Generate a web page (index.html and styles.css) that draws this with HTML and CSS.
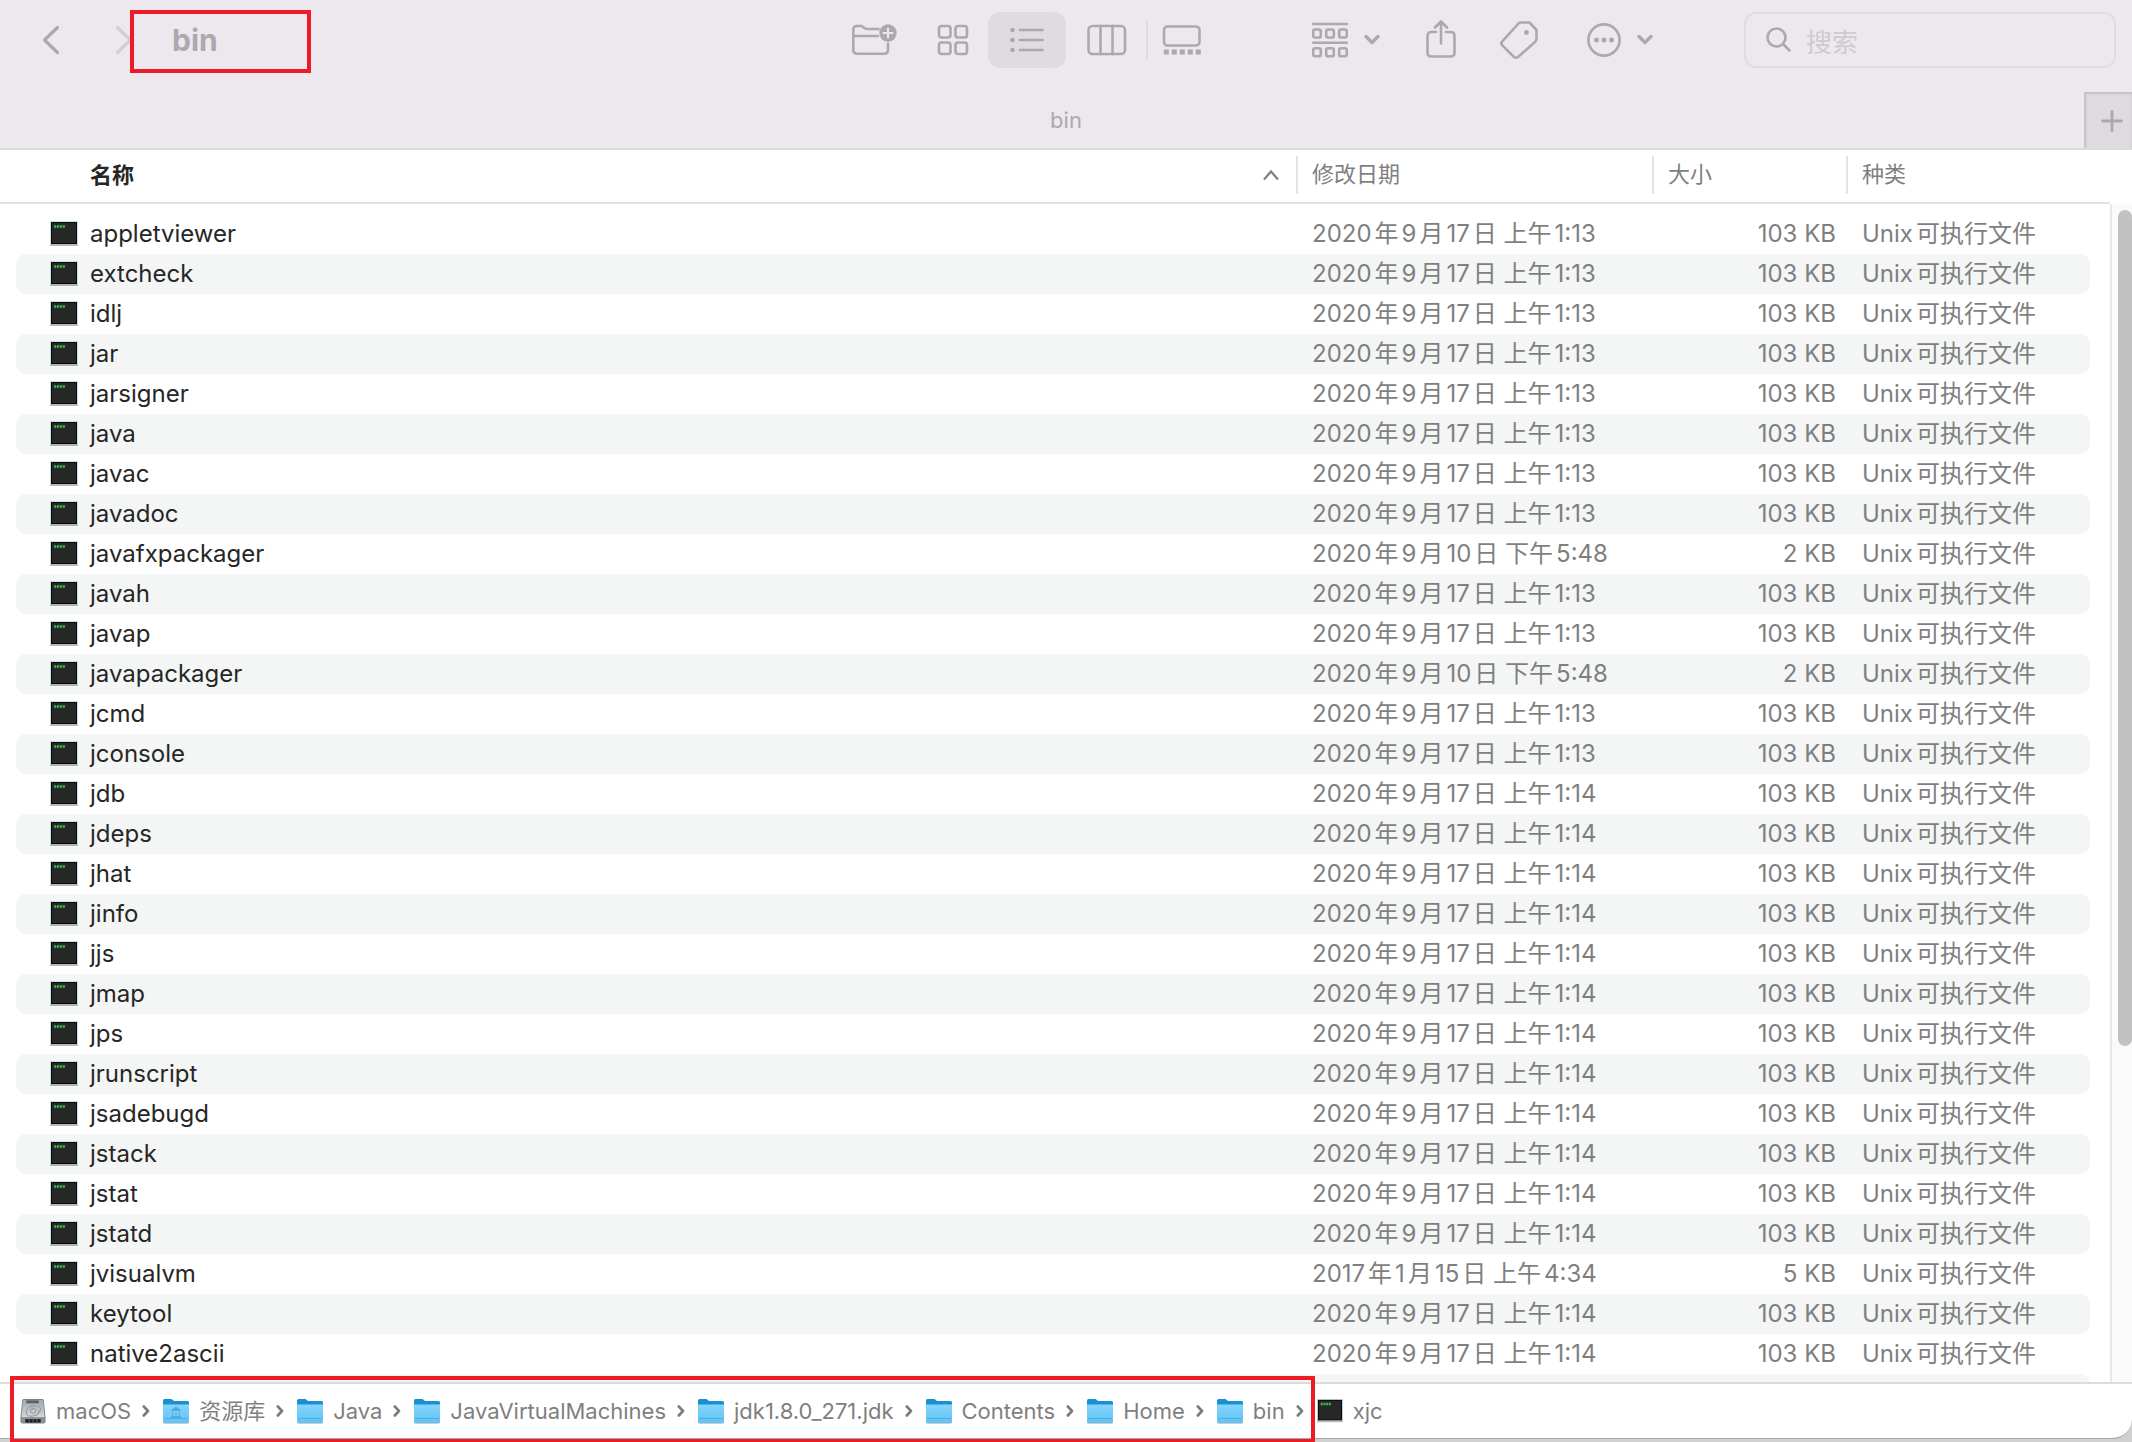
FILE: index.html
```html
<!DOCTYPE html>
<html lang="zh-CN">
<head>
<meta charset="utf-8">
<meta name="viewport" content="width=device-width, initial-scale=1">
<title>bin</title>
<link rel="stylesheet" href="styles.css">
</head>
<body>
<svg class="sprite" aria-hidden="true">
  <defs>
    <linearGradient id="front" x1="0" y1="0" x2="0" y2="1"><stop offset="0" stop-color="#83d5fd"/><stop offset="1" stop-color="#62c3f5"/></linearGradient>
    <linearGradient id="metal" x1="0" y1="0" x2="0" y2="1"><stop offset="0" stop-color="#a3abb0"/><stop offset="1" stop-color="#d2d7da"/></linearGradient>
    <symbol id="exec" viewBox="0 0 28 26">
      <rect x="0" y="2" width="28" height="23" rx="1" fill="#000" opacity=".28"/>
      <rect x="0" y="0" width="28" height="23" fill="#c4e3ea"/>
      <rect x="1" y="1" width="26" height="22" fill="#0a0a0a"/>
      <rect x="2" y="2" width="24" height="20" fill="#272727"/>
      <path d="M4 5.500h11" stroke="#37b24d" stroke-width="2.600" stroke-dasharray="2.300 .6"/>
    </symbol>
    <symbol id="folder" viewBox="0 0 26 26">
      <rect x="0" y="4" width="26" height="22" rx="2" fill="#000" opacity=".2"/>
      <path d="M0 2.500Q0 1 1.500 1H8q1 0 1.600.7l.8.800q.5.500 1.300.500h12.800Q26 3 26 4.500V12H0z" fill="#1b8fd2"/>
      <path d="M0 6.500h26v17q0 1.500-1.500 1.500h-23Q0 25 0 23.500z" fill="url(#front)"/>
      <path d="M1 20.500h24" stroke="#4aaee2" stroke-width="1"/>
    </symbol>
    <symbol id="library" viewBox="0 0 26 26">
      <use href="#folder" width="26" height="26"/>
      <path d="M8 12.500l5-3.500 5 3.500zM8.500 18.500h9v1h-9zM9.500 13.500v4.500M13 13.500v4.500M16.500 13.500v4.500" fill="#4fa9da" stroke="#4fa9da" stroke-width=".8"/>
    </symbol>
    <symbol id="disk" viewBox="0 0 26 27">
      <path d="M3.500 1h19q1.500 0 1.700 1.500L26 20v4.500q0 2-2 2H2q-2 0-2-2V20L1.800 2.500Q2 1 3.500 1z" fill="#7b8286"/>
      <path d="M3.800 2h18.400q1 0 1.200 1L25 20H1L2.600 3q.2-1 1.200-1z" fill="url(#metal)"/>
      <path d="M6 2.500h13v3H6z" fill="#596066"/>
      <path d="M17 9c-4-2-10 0-11 5s4 5.500 8 4.500 6-4 5-6.500M10 14q0-3 3.500-3t2 3.500-5.500-.5M19 8q5 5-3 10" fill="none" stroke="#878f94" stroke-width=".9"/>
      <path d="M1 21h24v4q0 1-1 1H2q-1 0-1-1z" fill="#8b9195"/>
      <path d="M5 22h16v3.500H5z" fill="#1c1f21"/>
      <path d="M9 22v4M13 22v4M17 22v4" stroke="#64696c"/>
    </symbol>
    <symbol id="down" viewBox="0 0 16 12"><path d="M2 2.500l6 6 6-6" fill="none" stroke="#aca8ad" stroke-width="3.400" stroke-linecap="round" stroke-linejoin="round"/></symbol>
    <symbol id="next" viewBox="0 0 8 12"><path d="M1.800 1.500L6 6l-4.200 4.500" fill="none" stroke="#7c7c7c" stroke-width="2.600" stroke-linecap="round" stroke-linejoin="round"/></symbol>
  </defs>
</svg>

<div class="window">
  <header class="toolbar">
    <nav class="history">
      <button class="back" aria-label="后退"><svg width="18" height="30" viewBox="0 0 18 30"><path d="M15.500 2.500L2.500 15l13 12.500"/></svg></button>
      <button class="forward" aria-label="前进" disabled><svg width="18" height="30" viewBox="0 0 18 30"><path d="M2.500 2.500L15.500 15l-13 12.500"/></svg></button>
      <h1 class="title">bin</h1>
    </nav>

    <div class="views">
      <button class="new-folder" aria-label="新建文件夹"><svg width="46" height="34" viewBox="0 0 46 34"><path d="M27.500 6H16.500q-2 0-3.500-1.300L12 4q-1-1-2.500-1H6Q2.300 3 2.300 7v20q0 3.700 4 3.700h27q3.700 0 3.700-3.700V20.500M2.300 13h24.700"/><circle class="solid" cx="37" cy="10" r="8.700"/><path class="plus" d="M37 5.500v9M32.500 10h9"/></svg></button>
      <button class="view icons" aria-label="图标"><svg width="32" height="32" viewBox="0 0 32 32"><rect x="2" y="2" width="11.500" height="11.500" rx="2.500"/><rect x="18.500" y="2" width="11.500" height="11.500" rx="2.500"/><rect x="2" y="18.500" width="11.500" height="11.500" rx="2.500"/><rect x="18.500" y="18.500" width="11.500" height="11.500" rx="2.500"/></svg></button>
      <button class="view list" aria-label="列表" aria-pressed="true"><svg width="34" height="26" viewBox="0 0 34 26"><path d="M10 3h22.500M10 13h22.500M10 23h22.500"/><circle class="solid" cx="2.500" cy="3" r="2.300"/><circle class="solid" cx="2.500" cy="13" r="2.300"/><circle class="solid" cx="2.500" cy="23" r="2.300"/></svg></button>
      <button class="view columns" aria-label="分栏"><svg width="40" height="32" viewBox="0 0 40 32"><rect x="1.500" y="2" width="36.500" height="28" rx="4"/><path d="M13.500 2v28M25.500 2v28"/></svg></button>
      <button class="view gallery" aria-label="画廊"><svg width="40" height="30" viewBox="0 0 40 30"><rect x="2" y="1.500" width="35.500" height="19" rx="3.500"/><path class="dots" d="M1.800 27h37"/></svg></button>
    </div>

    <div class="actions">
      <button class="group" aria-label="分组"><svg width="36" height="36" viewBox="0 0 36 36"><path d="M1.200 2h33.600M1.200 20.700h33.600"/><rect x="1.200" y="7.500" width="7.600" height="8" rx="1.800"/><rect x="14.200" y="7.500" width="7.600" height="8" rx="1.800"/><rect x="27.200" y="7.500" width="7.600" height="8" rx="1.800"/><rect x="1.200" y="26.300" width="7.600" height="8" rx="1.800"/><rect x="14.200" y="26.300" width="7.600" height="8" rx="1.800"/><rect x="27.200" y="26.300" width="7.600" height="8" rx="1.800"/></svg><svg width="16" height="12"><use href="#down"/></svg></button>
      <button class="share" aria-label="共享"><svg width="30" height="40" viewBox="0 0 30 40"><path d="M10 12H5.500q-4 0-4 4v16.500q0 4 4 4h19q4 0 4-4V16q0-4-4-4H20M15 23.500V1.500M9 7.500l6-6 6 6"/></svg></button>
      <button class="tag" aria-label="标签"><svg width="38" height="38" viewBox="0 0 38 38"><path d="M20.500 1.500h9L36.500 9v8.500q0 2-1.500 3.500L18 36q-2 1.500-4 0L2.300 24.300q-2-2 0-4L18 3q1-1.500 2.500-1.500z"/><circle class="solid" cx="26.500" cy="11.500" r="2.400"/></svg></button>
      <button class="more" aria-label="更多"><svg width="34" height="34" viewBox="0 0 34 34"><circle cx="17" cy="17" r="15.600"/><g class="solid"><circle cx="9.500" cy="17" r="2.500"/><circle cx="17" cy="17" r="2.500"/><circle cx="24.500" cy="17" r="2.500"/></g></svg><svg width="16" height="12"><use href="#down"/></svg></button>
    </div>

    <label class="search">
      <svg width="26" height="26" viewBox="0 0 26 26"><circle cx="10.500" cy="10.500" r="9"/><path d="M17.500 17.500l6 6"/></svg>
      <input type="search" placeholder="搜索" aria-label="搜索">
    </label>
  </header>

  <div class="tabs">
    <div class="tab">bin</div>
    <button class="add-tab" aria-label="新建标签页"><svg width="22" height="22" viewBox="0 0 22 22"><path d="M11 1.500v19M1.500 11h19"/></svg></button>
  </div>

  <main class="content">
    <table class="files">
      <thead>
        <tr><th class="name" aria-sort="ascending">名称<svg width="18" height="12" viewBox="0 0 18 12"><path d="M2 10.500l7-8 7 8"/></svg></th><th>修改日期</th><th>大小</th><th>种类</th></tr>
      </thead>
      <tbody>
        <tr><td><svg><use href="#exec"/></svg>appletviewer</td><td>2020年9月17日 上午1:13</td><td>103 KB</td><td>Unix可执行文件</td></tr>
        <tr><td><svg><use href="#exec"/></svg>extcheck</td><td>2020年9月17日 上午1:13</td><td>103 KB</td><td>Unix可执行文件</td></tr>
        <tr><td><svg><use href="#exec"/></svg>idlj</td><td>2020年9月17日 上午1:13</td><td>103 KB</td><td>Unix可执行文件</td></tr>
        <tr><td><svg><use href="#exec"/></svg>jar</td><td>2020年9月17日 上午1:13</td><td>103 KB</td><td>Unix可执行文件</td></tr>
        <tr><td><svg><use href="#exec"/></svg>jarsigner</td><td>2020年9月17日 上午1:13</td><td>103 KB</td><td>Unix可执行文件</td></tr>
        <tr><td><svg><use href="#exec"/></svg>java</td><td>2020年9月17日 上午1:13</td><td>103 KB</td><td>Unix可执行文件</td></tr>
        <tr><td><svg><use href="#exec"/></svg>javac</td><td>2020年9月17日 上午1:13</td><td>103 KB</td><td>Unix可执行文件</td></tr>
        <tr><td><svg><use href="#exec"/></svg>javadoc</td><td>2020年9月17日 上午1:13</td><td>103 KB</td><td>Unix可执行文件</td></tr>
        <tr><td><svg><use href="#exec"/></svg>javafxpackager</td><td>2020年9月10日 下午5:48</td><td>2 KB</td><td>Unix可执行文件</td></tr>
        <tr><td><svg><use href="#exec"/></svg>javah</td><td>2020年9月17日 上午1:13</td><td>103 KB</td><td>Unix可执行文件</td></tr>
        <tr><td><svg><use href="#exec"/></svg>javap</td><td>2020年9月17日 上午1:13</td><td>103 KB</td><td>Unix可执行文件</td></tr>
        <tr><td><svg><use href="#exec"/></svg>javapackager</td><td>2020年9月10日 下午5:48</td><td>2 KB</td><td>Unix可执行文件</td></tr>
        <tr><td><svg><use href="#exec"/></svg>jcmd</td><td>2020年9月17日 上午1:13</td><td>103 KB</td><td>Unix可执行文件</td></tr>
        <tr><td><svg><use href="#exec"/></svg>jconsole</td><td>2020年9月17日 上午1:13</td><td>103 KB</td><td>Unix可执行文件</td></tr>
        <tr><td><svg><use href="#exec"/></svg>jdb</td><td>2020年9月17日 上午1:14</td><td>103 KB</td><td>Unix可执行文件</td></tr>
        <tr><td><svg><use href="#exec"/></svg>jdeps</td><td>2020年9月17日 上午1:14</td><td>103 KB</td><td>Unix可执行文件</td></tr>
        <tr><td><svg><use href="#exec"/></svg>jhat</td><td>2020年9月17日 上午1:14</td><td>103 KB</td><td>Unix可执行文件</td></tr>
        <tr><td><svg><use href="#exec"/></svg>jinfo</td><td>2020年9月17日 上午1:14</td><td>103 KB</td><td>Unix可执行文件</td></tr>
        <tr><td><svg><use href="#exec"/></svg>jjs</td><td>2020年9月17日 上午1:14</td><td>103 KB</td><td>Unix可执行文件</td></tr>
        <tr><td><svg><use href="#exec"/></svg>jmap</td><td>2020年9月17日 上午1:14</td><td>103 KB</td><td>Unix可执行文件</td></tr>
        <tr><td><svg><use href="#exec"/></svg>jps</td><td>2020年9月17日 上午1:14</td><td>103 KB</td><td>Unix可执行文件</td></tr>
        <tr><td><svg><use href="#exec"/></svg>jrunscript</td><td>2020年9月17日 上午1:14</td><td>103 KB</td><td>Unix可执行文件</td></tr>
        <tr><td><svg><use href="#exec"/></svg>jsadebugd</td><td>2020年9月17日 上午1:14</td><td>103 KB</td><td>Unix可执行文件</td></tr>
        <tr><td><svg><use href="#exec"/></svg>jstack</td><td>2020年9月17日 上午1:14</td><td>103 KB</td><td>Unix可执行文件</td></tr>
        <tr><td><svg><use href="#exec"/></svg>jstat</td><td>2020年9月17日 上午1:14</td><td>103 KB</td><td>Unix可执行文件</td></tr>
        <tr><td><svg><use href="#exec"/></svg>jstatd</td><td>2020年9月17日 上午1:14</td><td>103 KB</td><td>Unix可执行文件</td></tr>
        <tr><td><svg><use href="#exec"/></svg>jvisualvm</td><td>2017年1月15日 上午4:34</td><td>5 KB</td><td>Unix可执行文件</td></tr>
        <tr><td><svg><use href="#exec"/></svg>keytool</td><td>2020年9月17日 上午1:14</td><td>103 KB</td><td>Unix可执行文件</td></tr>
        <tr><td><svg><use href="#exec"/></svg>native2ascii</td><td>2020年9月17日 上午1:14</td><td>103 KB</td><td>Unix可执行文件</td></tr>
        <tr><td></td><td></td><td></td><td></td></tr>
      </tbody>
    </table>
    <div class="scrollbar"><div class="thumb"></div></div>
  </main>

  <footer class="path">
    <ol>
      <li><svg class="item"><use href="#disk"/></svg>macOS<svg class="next"><use href="#next"/></svg></li>
      <li><svg class="item"><use href="#library"/></svg>资源库<svg class="next"><use href="#next"/></svg></li>
      <li><svg class="item"><use href="#folder"/></svg>Java<svg class="next"><use href="#next"/></svg></li>
      <li><svg class="item"><use href="#folder"/></svg>JavaVirtualMachines<svg class="next"><use href="#next"/></svg></li>
      <li><svg class="item"><use href="#folder"/></svg>jdk1.8.0_271.jdk<svg class="next"><use href="#next"/></svg></li>
      <li><svg class="item"><use href="#folder"/></svg>Contents<svg class="next"><use href="#next"/></svg></li>
      <li><svg class="item"><use href="#folder"/></svg>Home<svg class="next"><use href="#next"/></svg></li>
      <li><svg class="item"><use href="#folder"/></svg>bin<svg class="next"><use href="#next"/></svg></li>
      <li><svg class="item"><use href="#exec"/></svg>xjc</li>
    </ol>
  </footer>
</div>
<div class="mark mark-title"></div>
<div class="mark mark-path"></div>
</body>
</html>
```
FILE: styles.css
```css
* { box-sizing: border-box; }

body {
  margin: 0;
  height: 100vh;
  padding-bottom: 3px;
  overflow: hidden;
  position: relative;
  background: #d0d0d0;
  color: #262626;
  font: 24px/40px "Inter", "Noto Sans CJK SC", sans-serif;
  text-autospace: normal;
}

button {
  display: flex;
  align-items: center;
  justify-content: center;
  height: 56px;
  padding: 0;
  border: 0;
  background: none;
}

.sprite { position: absolute; width: 0; height: 0; }

.window {
  display: flex;
  flex-direction: column;
  height: 100%;
  overflow: hidden;
  background: #fff;
  border-bottom: 1px solid #a8a8a8;
  border-bottom-right-radius: 20px;
}

/* Toolbar */
.toolbar {
  display: flex;
  align-items: center;
  flex: none;
  height: 92px;
  padding: 0 16px 12px 42px;
  background: #ede8ee;
}
.toolbar svg {
  fill: none;
  stroke: #aca8ad;
  stroke-width: 2.6;
  stroke-linecap: round;
  stroke-linejoin: round;
}
.toolbar .solid { fill: #aca8ad; stroke: none; }
.toolbar .plus { stroke: #ede8ee; stroke-width: 2; }
.toolbar .dots { stroke-width: 5; stroke-dasharray: 5 3; stroke-linecap: butt; }

.history { display: flex; align-items: center; flex: 1; }
.history svg { stroke-width: 3.2; }
.forward { margin-left: 55px; }
.forward svg { stroke: #d3ced4; }
.title { margin: 0 0 0 39px; font-size: 30px; line-height: 40px; color: #aca8ad; }

.views, .actions { display: flex; align-items: center; }
.new-folder { width: 64px; margin-right: 12px; }
.icons { width: 70px; }
.list { width: 78px; border-radius: 12px; background: #dfdbe0; }
.columns { width: 82px; }
.gallery { width: 68px; position: relative; }
.gallery::before {
  content: "";
  position: absolute;
  left: -2px;
  width: 2px;
  height: 40px;
  background: #dfdbe0;
}

.actions { margin-left: 80px; }
.group, .more { width: 100px; gap: 16px; }
.share { width: 90px; }
.tag { width: 66px; }
.more { margin-left: 18px; }

.search {
  display: flex;
  align-items: center;
  gap: 14px;
  width: 372px;
  height: 56px;
  margin-left: 74px;
  padding: 0 20px;
  border: 2px solid #dfdbe0;
  border-radius: 12px;
}
.search input {
  flex: 1;
  min-width: 0;
  padding: 6px 0 0;
  border: 0;
  outline: 0;
  background: none;
  font: 26px/40px "Inter", "Noto Sans CJK SC", sans-serif;
}
.search input::placeholder { color: #cfcad0; opacity: 1; }

/* Tabs */
.tabs {
  display: grid;
  grid-template-columns: 48px 1fr 48px;
  flex: none;
  height: 58px;
  border-bottom: 2px solid #dcdadc;
  background: #ede8ee;
}
.tab {
  grid-column: 2;
  text-align: center;
  font-size: 22px;
  line-height: 56px;
  color: #aca8ad;
}
.add-tab {
  padding: 2px 0 0 6px;
  border-left: 2px solid #c9c4ca;
  background: #dfdae0;
  box-shadow: inset 0 2px 2px #c4bfc5;
}
.add-tab svg { stroke: #aca8ad; stroke-width: 2.8; stroke-linecap: round; }

/* File list */
.content { display: flex; flex: 1; min-height: 0; overflow: hidden; }
.files { display: block; flex: 1; }
.files thead, .files tbody { display: block; }
.files tr {
  display: grid;
  grid-template-columns: 1fr 356px 194px 244px;
}
.files thead tr {
  height: 54px;
  padding: 6px 20px 8px 16px;
  border-bottom: 2px solid #e0e0e0;
}
.files th {
  padding: 0 14px;
  border-left: 2px solid #e2e2e2;
  text-align: left;
  font-size: 22px;
  line-height: 36px;
  font-weight: 400;
  color: #7f7f7f;
}
.files th.name {
  display: flex;
  align-items: center;
  justify-content: space-between;
  padding-left: 74px;
  padding-right: 16px;
  border-left: 0;
  font-weight: 700;
  color: #262626;
}
.files th svg { fill: none; stroke: #7f7f7f; stroke-width: 2.2; }
.files tbody { padding-top: 10px; }
.files tbody tr { height: 40px; margin: 0 20px 0 16px; border-radius: 10px; }
.files tbody tr:nth-child(even) { background: #f4f6f5; }
.files td { padding: 0 0 0 16px; color: #7f7f7f; }
.files td:first-child {
  display: flex;
  align-items: center;
  gap: 12px;
  padding-left: 34px;
  color: #262626;
}
.files td:nth-child(3) { padding-right: 10px; text-align: right; }
.files td svg { width: 28px; height: 26px; }

.scrollbar {
  width: 22px;
  margin-top: 54px;
  padding: 6px 0 0 6px;
  border-left: 2px solid #e8e8e8;
  background: #fafafa;
}
.thumb { height: calc(71% + 4px); border-radius: 8px; background: #c1c1c1; }

/* Path bar */
.path { flex: none; height: 56px; border-top: 2px solid #dcdcdc; }
.path ol {
  display: flex;
  margin: 0;
  padding: 0 20px;
  list-style: none;
  font-size: 22px;
  line-height: 54px;
  color: #7f7f7f;
}
.path li { display: flex; align-items: center; }
.path .item { width: 26px; height: 26px; margin-right: 10px; }
.path .next { width: 8px; height: 12px; margin: 0 13px 0 11px; }

/* Red outlines over the window */
.mark { position: absolute; border: 4px solid #ed1c24; pointer-events: none; }
.mark-title { left: 130px; top: 10px; width: 181px; height: 63px; }
.mark-path { left: 10px; bottom: -1px; width: 1305px; height: 67px; }
```
